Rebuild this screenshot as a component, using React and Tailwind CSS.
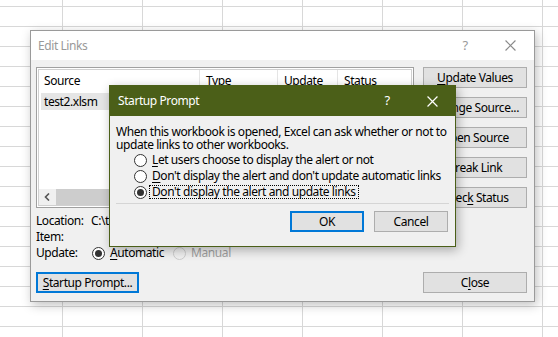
import React from "react";

const F = "font-['Noto_Sans',sans-serif] tracking-[-0.42px]";

function XIcon({ color, size = 10 }) {
  return (
    <svg width={size} height={size} viewBox="0 0 10 10" className="block">
      <path d="M0.5 0.5 L9.5 9.5 M9.5 0.5 L0.5 9.5" stroke={color} strokeWidth="1.1" fill="none" />
    </svg>
  );
}

function Radio({ checked, disabled }) {
  return (
    <span
      className={
        disabled
          ? "flex w-[13px] h-[13px] shrink-0 items-center justify-center rounded-full border border-[#cccccc] bg-[#f0f0f0]"
          : "flex w-[13px] h-[13px] shrink-0 items-center justify-center rounded-full border border-[#333333] bg-white"
      }
    >
      {checked && <span className="block w-[7px] h-[7px] rounded-full bg-[#333333]" />}
    </span>
  );
}

function Btn({ children, focused, className = "" }) {
  return (
    <div
      className={
        (focused
          ? "border-2 border-[#0078d7] "
          : "border border-[#adadad] ") +
        "flex h-[21px] items-center justify-center bg-[#e1e1e1] text-black leading-none whitespace-nowrap " +
        className
      }
    >
      {children}
    </div>
  );
}

const u = "underline decoration-1 underline-offset-[2px]";

export default function App() {
  return (
    <div
      className={
        F +
        " relative w-[558px] h-[337px] overflow-hidden whitespace-nowrap bg-white text-[12px] text-black bg-[linear-gradient(to_right,#d8d8d8_1px,transparent_1px),linear-gradient(to_bottom,#d8d8d8_1px,transparent_1px)] bg-[size:80px_20px] bg-[position:62px_6px]"
      }
    >
      {/* Edit Links dialog */}
      <div className="absolute left-[30px] top-[30px] w-[505px] h-[272px] flex flex-col border border-[#9a9a9a] bg-[#f0f0f0] shadow-[2px_3px_10px_rgba(0,0,0,0.25)]">
        <div className="h-[29px] shrink-0 flex items-center bg-white pl-[7px] text-[#999999]">
          <span className="flex-1 text-[12px]">Edit Links</span>
          <span className="w-[10px] text-center text-[13px] mr-[35px]">?</span>
          <span className="mr-[18px]">
            <XIcon color="#8a8a8a" size={11} />
          </span>
        </div>
        <div className="flex flex-1 pl-[5px] pr-[7px] pt-[7px] pb-[8px]">
          {/* Left column */}
          <div className="flex w-[378px] flex-col">
            <div className="h-[141px] flex flex-col border border-[#a0a0a0] bg-white p-[1px]">
              <div className="flex flex-1 flex-col border border-[#d0d0d0] bg-white">
                <div className="flex h-[21px] items-center">
                  <div className="w-[161px] h-full flex items-center pl-[5px] border-r border-[#e5e5e5]">Source</div>
                  <div className="w-[78px] h-full flex items-center pl-[6px] border-r border-[#e5e5e5]">Type</div>
                  <div className="w-[60px] h-full flex items-center pl-[6px] border-r border-[#e5e5e5]">Update</div>
                  <div className="flex-1 h-full flex items-center pl-[6px]">Status</div>
                </div>
                <div className="mt-[2px] ml-[2px] flex h-[17px] w-[159px] items-center bg-[#e5e5e5] pl-[3px]">test2.xlsm</div>
                <div className="flex-1" />
                <div className="flex h-[16px] bg-[#f0f0f0]">
                  <div className="flex w-[16px] items-center justify-center">
                    <svg width="6" height="8" viewBox="0 0 6 8">
                      <path d="M5 0.5 L1.5 4 L5 7.5" stroke="#555" strokeWidth="1.6" fill="none" />
                    </svg>
                  </div>
                  <div className="ml-[1px] w-[200px] bg-[#cdcdcd]" />
                </div>
              </div>
            </div>
            <div className="mt-[5px] flex h-[16px] items-center">
              <span className="w-[55px]">Location:</span>
              <span>C:\test\</span>
            </div>
            <div className="flex h-[16px] items-center">
              <span className="w-[55px]">Item:</span>
            </div>
            <div className="flex h-[16px] items-center">
              <span className="w-[56px]">Update:</span>
              <Radio checked />
              <span className="ml-[5px]">
                <span className={u}>A</span>utomatic
              </span>
              <span className="ml-[9px]">
                <Radio disabled />
              </span>
              <span className="ml-[5px] text-[#a0a0a0]">Manual</span>
            </div>
            <div className="mt-[11px] flex">
              <Btn focused className="w-[103px]">
                <span>
                  <span className={u}>S</span>tartup Prompt...
                </span>
              </Btn>
            </div>
          </div>
          {/* Right column */}
          <div className="ml-[9px] flex w-[104px] flex-col gap-[9px]">
            <Btn>
              <span>
                <span className={u}>U</span>pdate Values
              </span>
            </Btn>
            <Btn>
              <span>
                <span className={u}>C</span>hange Source...
              </span>
            </Btn>
            <Btn>
              <span>
                <span className={u}>O</span>pen Source
              </span>
            </Btn>
            <Btn>
              <span>
                <span className={u}>B</span>reak Link
              </span>
            </Btn>
            <Btn>
              <span>
                Chec<span className={u}>k</span> Status
              </span>
            </Btn>
            <div className="flex-1" />
            <Btn>
              <span>
                C<span className={u}>l</span>ose
              </span>
            </Btn>
          </div>
        </div>
      </div>

      {/* Startup Prompt dialog */}
      <div className="absolute left-[109px] top-[85px] w-[347px] h-[162px] flex flex-col border border-[#4b5f18] bg-[#f0f0f0] shadow-[2px_3px_10px_rgba(0,0,0,0.3)]">
        <div className="h-[30px] shrink-0 flex items-center bg-[#4b5f18] pl-[8px] text-white">
          <span className="flex-1 text-[12px]">Startup Prompt</span>
          <span className="w-[10px] text-center text-[13px] mr-[35px]">?</span>
          <span className="mr-[17px]">
            <XIcon color="#ffffff" size={11} />
          </span>
        </div>
        <div className="flex flex-1 flex-col px-[6px] pt-[9px]">
          <div className="leading-[13px]">
            <div>When this workbook is opened, Excel can ask whether or not to</div>
            <div>update links to other workbooks.</div>
          </div>
          <div className="mt-[1px] flex flex-col pl-[18px]">
            <div className="flex h-[16px] items-center">
              <Radio />
              <span className="ml-[5px]">
                <span className={u}>L</span>et users choose to display the alert or not
              </span>
            </div>
            <div className="flex h-[16px] items-center">
              <Radio />
              <span className="ml-[5px]">
                <span className={u}>D</span>on't display the alert and don't update automatic links
              </span>
            </div>
            <div className="flex h-[16px] items-center">
              <Radio checked />
              <span className="ml-[2px] border border-dotted border-black px-[2px] leading-[12px]">
                D<span className={u}>o</span>n't display the alert and update links
              </span>
            </div>
          </div>
          <div className="mt-[3px] h-[1px] bg-[#d5d5d5]" />
          <div className="mt-[7px] flex justify-end gap-[10px] pr-[1px]">
            <Btn focused className="w-[74px]">OK</Btn>
            <Btn className="w-[74px]">Cancel</Btn>
          </div>
        </div>
      </div>
    </div>
  );
}
